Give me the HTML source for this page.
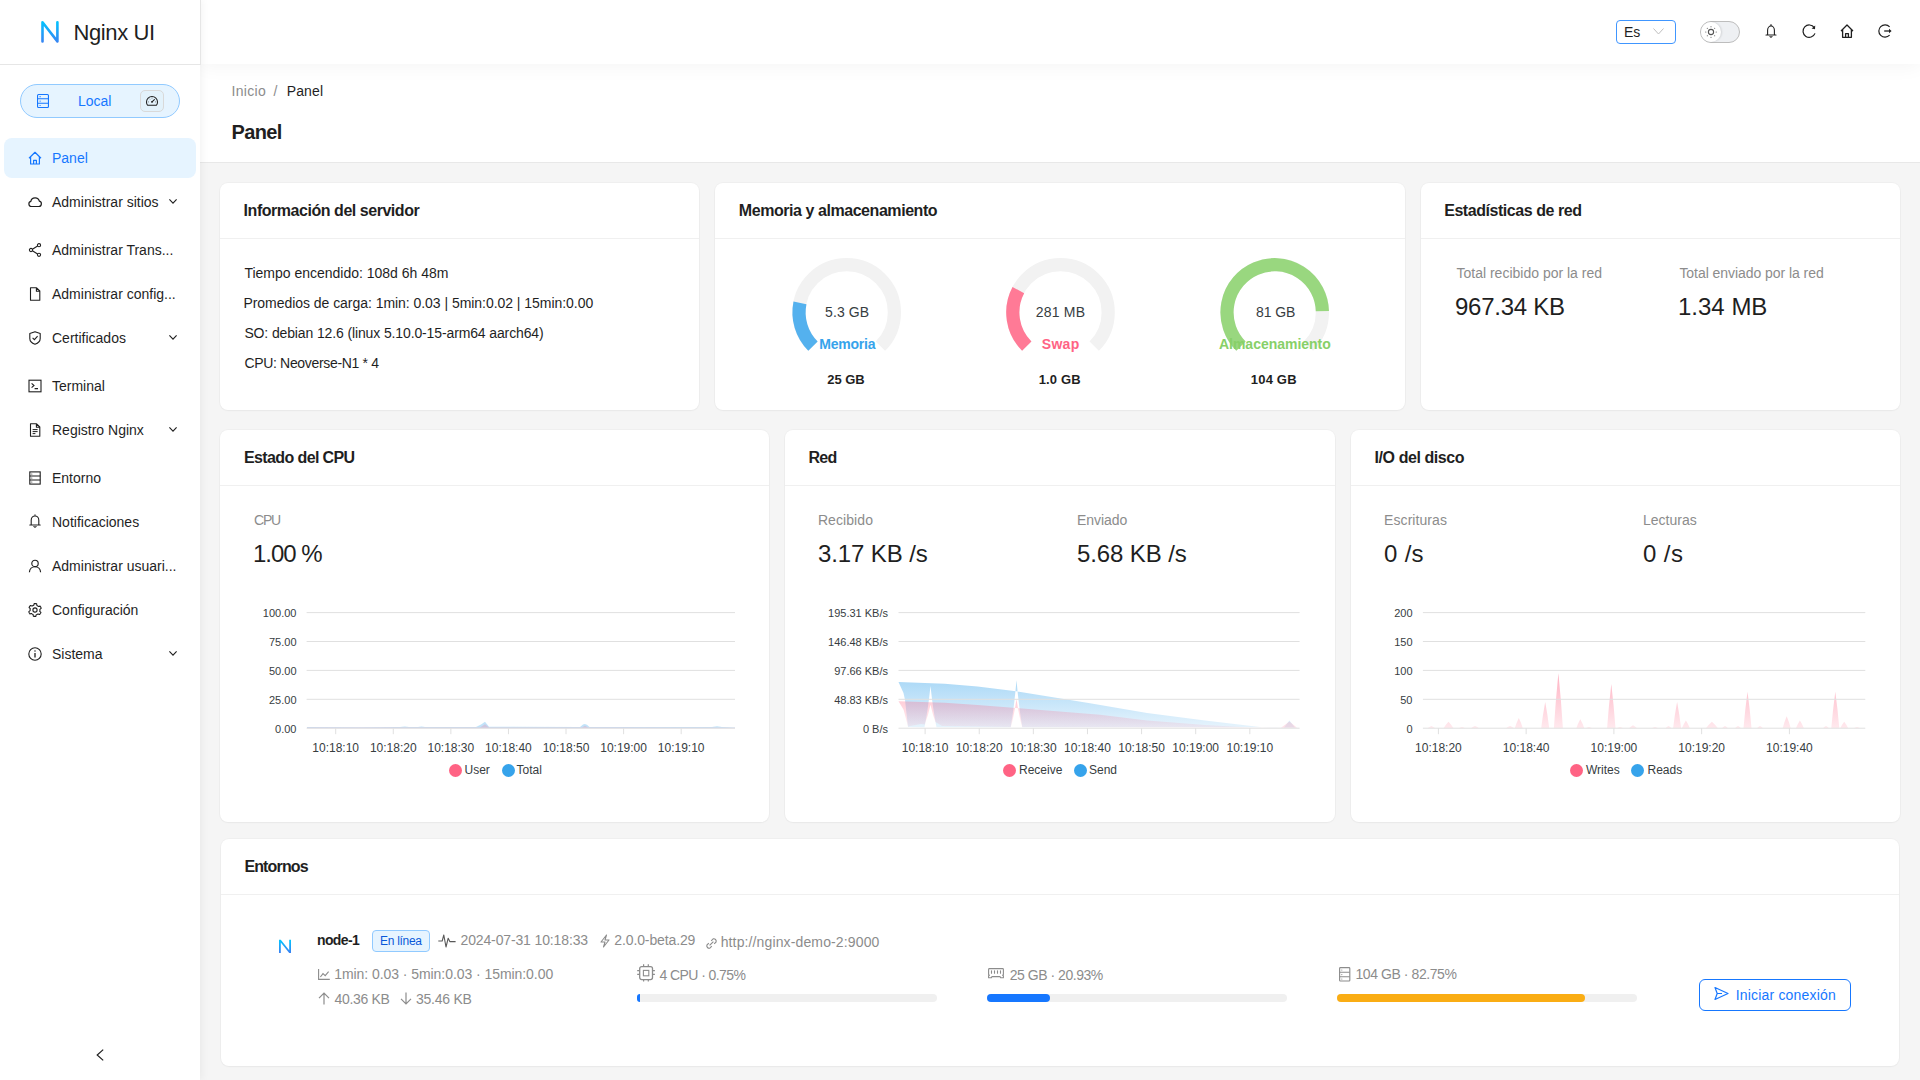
<!DOCTYPE html>
<html><head><meta charset="utf-8"><title>Nginx UI</title>
<style>
html,body{margin:0;padding:0}
body{width:1920px;height:1080px;position:relative;overflow:hidden;background:#f5f5f5;font-family:"Liberation Sans",sans-serif;}
.t{position:absolute;white-space:nowrap;line-height:1}
svg{overflow:visible}
</style></head><body>

<div style="position:absolute;left:200px;top:64px;width:1720px;height:98px;background:#fff;border-bottom:1px solid #e8e8e8"></div>
<div style="position:absolute;left:200px;top:0px;width:1720px;height:64px;background:#fff;box-shadow:0 3px 18px rgba(0,0,0,0.045)"></div>
<div style="position:absolute;left:0px;top:0px;width:200px;height:1080px;background:#fff;box-shadow:2px 0 8px rgba(0,0,0,0.05)"></div>
<div style="position:absolute;left:0px;top:0px;width:200px;height:64px;background:#fff;border-bottom:1px solid #e6e6e6;border-right:1px solid #e6e6e6;box-sizing:border-box;width:201px;height:65px"></div>
<svg style="position:absolute;left:40px;top:20px;" width="20" height="24" viewBox="0 0 20 24"><defs><linearGradient id="lg" x1="0" y1="0" x2="0" y2="24" gradientUnits="userSpaceOnUse"><stop offset="0" stop-color="#00c8ff"/><stop offset="1" stop-color="#3b7ff2"/></linearGradient></defs><path d="M2.5 21.4V2.3L17.4 21.4V2.3" fill="none" stroke="url(#lg)" stroke-width="2.6" stroke-linecap="round" stroke-linejoin="round"/></svg>
<div class="t" style="left:73.50px;top:22.00px;font-size:22px;color:#1f1f1f;letter-spacing:-0.400px;">Nginx UI</div>
<div style="position:absolute;left:1616px;top:20px;width:60px;height:24px;box-sizing:border-box;border:1px solid #4096ff;border-radius:4px;background:#fff"></div>
<div class="t" style="left:1624.00px;top:25.00px;font-size:14px;color:#1f1f1f;">Es</div>
<svg style="position:absolute;left:1653px;top:28px;" width="11" height="7" viewBox="0 0 11 7"><path d="M0.5 0.5L5.5 6L10.5 0.5" fill="none" stroke="#bfbfbf" stroke-width="1"/></svg>
<div style="position:absolute;left:1700px;top:21px;width:40px;height:22px;box-sizing:border-box;border:1px solid #bdbdbd;border-radius:11px;background:#eef0f3"></div>
<div style="position:absolute;left:1701px;top:22px;width:20px;height:20px;border-radius:50%;background:#fff;box-shadow:1px 0 2px rgba(0,0,0,0.12)"></div>
<svg style="position:absolute;left:1701px;top:22px;" width="20" height="20" viewBox="0 0 20 20"><circle cx="10" cy="10" r="2.6" fill="none" stroke="#555" stroke-width="1.1"/><circle cx="15.20" cy="10.00" r="0.55" fill="#555"/><circle cx="13.68" cy="13.68" r="0.55" fill="#555"/><circle cx="10.00" cy="15.20" r="0.55" fill="#555"/><circle cx="6.32" cy="13.68" r="0.55" fill="#555"/><circle cx="4.80" cy="10.00" r="0.55" fill="#555"/><circle cx="6.32" cy="6.32" r="0.55" fill="#555"/><circle cx="10.00" cy="4.80" r="0.55" fill="#555"/><circle cx="13.68" cy="6.32" r="0.55" fill="#555"/></svg>
<svg style="position:absolute;left:1764px;top:24px;" width="14" height="14" viewBox="0 0 14 14"><path d="M3.6 11V6.3C3.6 4 5.1 1.9 7 1.9S10.4 4 10.4 6.3V11M2 11H12M6 12.5Q7 13.9 8 12.5M7 0.6V1.9" fill="none" stroke="#1f1f1f" stroke-width="1.1" stroke-linecap="round"/></svg>
<svg style="position:absolute;left:1802px;top:24px;" width="14" height="14" viewBox="0 0 14 14"><path d="M12.3 3.6A6.2 6.2 0 1 0 13 9.4" fill="none" stroke="#1f1f1f" stroke-width="1.2"/><path d="M13.2 1.6L13 5.2L9.6 4.4Z" fill="#1f1f1f"/></svg>
<svg style="position:absolute;left:1840px;top:24px;" width="14" height="14" viewBox="0 0 14 14"><path d="M1 7L7 1L13 7M2.6 5.6V13.3H11.4V5.6M5.6 13.3V9.6H8.4V13.3" fill="none" stroke="#1f1f1f" stroke-width="1.3" stroke-linejoin="round"/></svg>
<svg style="position:absolute;left:1878px;top:24px;" width="14" height="14" viewBox="0 0 14 14"><path d="M11.6 2.8A6.2 6.2 0 1 0 11.6 11.2" fill="none" stroke="#1f1f1f" stroke-width="1.2"/><path d="M6.2 7H11.4" stroke="#1f1f1f" stroke-width="1.3"/><path d="M11 4.8L13.6 7L11 9.2Z" fill="#1f1f1f"/></svg>
<div style="position:absolute;left:20px;top:84px;width:160px;height:34px;box-sizing:border-box;border:1px solid #91caff;border-radius:17px;background:#e6f4ff"></div>
<svg style="position:absolute;left:37px;top:94px;" width="12" height="14" viewBox="0 0 12 14"><rect x="0.55" y="0.55" width="10.9" height="12.9" rx="1" fill="none" stroke="#1677ff" stroke-width="1.1"/><path d="M0.6 4.8H11.4M0.6 9.3H11.4" stroke="#1677ff" stroke-width="1.1"/><circle cx="3.1" cy="2.7" r="0.6" fill="#1677ff"/><circle cx="3.1" cy="7.1" r="0.6" fill="#1677ff"/><circle cx="3.1" cy="11.5" r="0.6" fill="#1677ff"/></svg>
<div class="t" style="left:78.00px;top:94.00px;font-size:14px;color:#1677ff;letter-spacing:-0.050px;">Local</div>
<div style="position:absolute;left:140px;top:90px;width:24px;height:22px;box-sizing:border-box;border:1px solid #d9d9d9;border-radius:5px;background:#e3f2fb"></div>
<svg style="position:absolute;left:146px;top:96px;" width="12" height="10" viewBox="0 0 12 10"><path d="M1.6 9.3Q0.5 7.8 0.5 5.9A5.5 5.5 0 0 1 11.5 5.9Q11.5 7.8 10.4 9.3Z" fill="none" stroke="#1f1f1f" stroke-width="1.05" stroke-linejoin="round"/><path d="M6 5.8L8.4 3.6" stroke="#1f1f1f" stroke-width="1.1" stroke-linecap="round"/><circle cx="6" cy="5.8" r="0.9" fill="#1f1f1f"/><path d="M2.2 5.9H3M9 5.9H9.8M3.6 2.8L4 3.4M6 1.7V2.5" stroke="#555" stroke-width="0.8"/></svg>
<div style="position:absolute;left:4px;top:138px;width:192px;height:40px;border-radius:8px;background:#e6f4ff"></div>
<div class="t" style="left:52.00px;top:151.00px;font-size:14px;color:#1677ff;">Panel</div>
<div class="t" style="left:52.00px;top:195.00px;font-size:14px;color:#1f1f1f;">Administrar sitios</div>
<svg style="position:absolute;left:169px;top:198.5px;" width="8" height="5" viewBox="0 0 8 5"><path d="M0.4 0.4L4 4.2L7.6 0.4" fill="none" stroke="#1f1f1f" stroke-width="1.1"/></svg>
<div class="t" style="left:52.00px;top:243.00px;font-size:14px;color:#1f1f1f;">Administrar Trans...</div>
<div class="t" style="left:52.00px;top:287.00px;font-size:14px;color:#1f1f1f;">Administrar config...</div>
<div class="t" style="left:52.00px;top:331.00px;font-size:14px;color:#1f1f1f;">Certificados</div>
<svg style="position:absolute;left:169px;top:334.5px;" width="8" height="5" viewBox="0 0 8 5"><path d="M0.4 0.4L4 4.2L7.6 0.4" fill="none" stroke="#1f1f1f" stroke-width="1.1"/></svg>
<div class="t" style="left:52.00px;top:379.00px;font-size:14px;color:#1f1f1f;">Terminal</div>
<div class="t" style="left:52.00px;top:423.00px;font-size:14px;color:#1f1f1f;">Registro Nginx</div>
<svg style="position:absolute;left:169px;top:426.5px;" width="8" height="5" viewBox="0 0 8 5"><path d="M0.4 0.4L4 4.2L7.6 0.4" fill="none" stroke="#1f1f1f" stroke-width="1.1"/></svg>
<div class="t" style="left:52.00px;top:471.00px;font-size:14px;color:#1f1f1f;">Entorno</div>
<div class="t" style="left:52.00px;top:515.00px;font-size:14px;color:#1f1f1f;">Notificaciones</div>
<div class="t" style="left:52.00px;top:559.00px;font-size:14px;color:#1f1f1f;">Administrar usuari...</div>
<div class="t" style="left:52.00px;top:603.00px;font-size:14px;color:#1f1f1f;">Configuración</div>
<div class="t" style="left:52.00px;top:647.00px;font-size:14px;color:#1f1f1f;">Sistema</div>
<svg style="position:absolute;left:169px;top:650.5px;" width="8" height="5" viewBox="0 0 8 5"><path d="M0.4 0.4L4 4.2L7.6 0.4" fill="none" stroke="#1f1f1f" stroke-width="1.1"/></svg>
<svg style="position:absolute;left:28px;top:150.6px;" width="14" height="14" viewBox="0 0 14 14"><path d="M1 7.2L7 1.3L13 7.2M2.6 5.8V13H11.4V5.8M5.6 13V9.4H8.4V13" fill="none" stroke="#1677ff" stroke-width="1.2" stroke-linejoin="round"/></svg>
<svg style="position:absolute;left:28px;top:194.7px;" width="14" height="14" viewBox="0 0 14 14"><path d="M3.6 11.5H10.8A2.7 2.7 0 0 0 11.4 6.2A4.4 4.4 0 0 0 2.8 6.4A2.6 2.6 0 0 0 3.6 11.5Z" fill="none" stroke="#1f1f1f" stroke-width="1.2"/></svg>
<svg style="position:absolute;left:28px;top:243px;" width="14" height="14" viewBox="0 0 14 14"><circle cx="11" cy="2.2" r="1.6" fill="none" stroke="#1f1f1f" stroke-width="1.1"/><circle cx="3" cy="7" r="1.6" fill="none" stroke="#1f1f1f" stroke-width="1.1"/><circle cx="11" cy="11.8" r="1.6" fill="none" stroke="#1f1f1f" stroke-width="1.1"/><path d="M4.4 6.2L9.6 3M4.4 7.8L9.6 11" stroke="#1f1f1f" stroke-width="1.1"/></svg>
<svg style="position:absolute;left:28px;top:286.75px;" width="14" height="14" viewBox="0 0 14 14"><path d="M2.5 0.8H8.6L11.8 4V13.2H2.5Z M8.4 0.8V4.2H11.8" fill="none" stroke="#1f1f1f" stroke-width="1.1" stroke-linejoin="round"/></svg>
<svg style="position:absolute;left:28px;top:330.5px;" width="14" height="14" viewBox="0 0 14 14"><path d="M7 0.8L12.2 2.6V7.4C12.2 10.2 9.8 12.2 7 13.2C4.2 12.2 1.8 10.2 1.8 7.4V2.6Z" fill="none" stroke="#1f1f1f" stroke-width="1.1" stroke-linejoin="round"/><path d="M4.6 6.9L6.4 8.6L9.6 5.2" fill="none" stroke="#1f1f1f" stroke-width="1.1"/></svg>
<svg style="position:absolute;left:28px;top:378.75px;" width="14" height="14" viewBox="0 0 14 14"><rect x="1" y="1.2" width="12" height="11.6" fill="none" stroke="#1f1f1f" stroke-width="1.1"/><path d="M3.6 4.4L6 6.5L3.6 8.6M6.6 9.6H10" fill="none" stroke="#1f1f1f" stroke-width="1.1"/></svg>
<svg style="position:absolute;left:28px;top:422.5px;" width="14" height="14" viewBox="0 0 14 14"><path d="M2.5 0.8H8.6L11.8 4V13.2H2.5Z M8.4 0.8V4.2H11.8" fill="none" stroke="#1f1f1f" stroke-width="1.1" stroke-linejoin="round"/><path d="M4.6 6.6H9.6M4.6 8.6H9.6M4.6 10.6H7.4" stroke="#1f1f1f" stroke-width="1"/></svg>
<svg style="position:absolute;left:28px;top:470.5px;" width="14" height="14" viewBox="0 0 14 14"><rect x="1.8" y="0.9" width="10.4" height="12.2" fill="none" stroke="#1f1f1f" stroke-width="1.1"/><path d="M1.8 5H12.2M1.8 9H12.2" stroke="#1f1f1f" stroke-width="1.1"/><circle cx="3.8" cy="3" r="0.5" fill="#1f1f1f"/><circle cx="3.8" cy="7" r="0.5" fill="#1f1f1f"/><circle cx="3.8" cy="11" r="0.5" fill="#1f1f1f"/></svg>
<svg style="position:absolute;left:28px;top:514.25px;" width="14" height="14" viewBox="0 0 14 14"><path d="M3.2 11V6.2C3.2 3.9 4.9 2 7 2S10.8 3.9 10.8 6.2V11M1.8 11H12.2M5.9 12.5Q7 13.8 8.1 12.5M7 0.8V2" fill="none" stroke="#1f1f1f" stroke-width="1.1" stroke-linecap="round"/></svg>
<svg style="position:absolute;left:28px;top:558.75px;" width="14" height="14" viewBox="0 0 14 14"><circle cx="7" cy="4.4" r="3.2" fill="none" stroke="#1f1f1f" stroke-width="1.15"/><path d="M1.4 13.2C1.6 9.9 4 7.7 7 7.7S12.4 9.9 12.6 13.2" fill="none" stroke="#1f1f1f" stroke-width="1.15"/></svg>
<svg style="position:absolute;left:28px;top:602.8px;" width="14" height="14" viewBox="0 0 14 14"><path d="M7.00 0.60 L7.84 0.65 L8.66 0.82 L8.88 2.47 L9.45 2.76 L9.98 3.11 L10.46 3.54 L12.08 3.10 L12.54 3.80 L12.91 4.55 L13.18 5.34 L11.86 6.36 L11.90 7.00 L11.86 7.64 L11.73 8.27 L12.91 9.45 L12.54 10.20 L12.08 10.90 L11.53 11.53 L9.98 10.89 L9.45 11.24 L8.88 11.53 L8.27 11.73 L7.84 13.35 L7.00 13.40 L6.16 13.35 L5.34 13.18 L5.12 11.53 L4.55 11.24 L4.02 10.89 L3.54 10.46 L1.92 10.90 L1.46 10.20 L1.09 9.45 L0.82 8.66 L2.14 7.64 L2.10 7.00 L2.14 6.36 L2.27 5.73 L1.09 4.55 L1.46 3.80 L1.92 3.10 L2.47 2.47 L4.02 3.11 L4.55 2.76 L5.12 2.47 L5.73 2.27 L6.16 0.65Z" fill="none" stroke="#1f1f1f" stroke-width="1.1" stroke-linejoin="round"/><circle cx="7" cy="7" r="2.1" fill="none" stroke="#1f1f1f" stroke-width="1.1"/></svg>
<svg style="position:absolute;left:28px;top:646.6px;" width="14" height="14" viewBox="0 0 14 14"><circle cx="7" cy="7" r="6.2" fill="none" stroke="#1f1f1f" stroke-width="1.1"/><path d="M7 6V10.6" stroke="#1f1f1f" stroke-width="1.3"/><circle cx="7" cy="4.1" r="0.75" fill="#1f1f1f"/></svg>
<svg style="position:absolute;left:96px;top:1049px;" width="8" height="12" viewBox="0 0 8 12"><path d="M7.2 0.6L1.2 6L7.2 11.4" fill="none" stroke="#1f1f1f" stroke-width="1.2"/></svg>
<div class="t" style="left:231.40px;top:84.00px;font-size:14px;color:#8c8c8c;letter-spacing:0.360px;">Inicio</div>
<div class="t" style="left:273.40px;top:84.00px;font-size:14px;color:#8c8c8c;">/</div>
<div class="t" style="left:286.70px;top:84.00px;font-size:14px;color:#1f1f1f;letter-spacing:0.150px;">Panel</div>
<div class="t" style="left:231.40px;top:122.00px;font-size:20px;color:#1f1f1f;font-weight:600;letter-spacing:-0.600px;">Panel</div>
<div style="position:absolute;left:220px;top:183px;width:479px;height:227px;background:#fff;border-radius:8px;box-shadow:0 0 0 1px rgba(0,0,0,0.025),0 1px 2px rgba(0,0,0,0.03)"></div>
<div style="position:absolute;left:220px;top:238px;width:479px;height:1px;background:#f0f0f0"></div>
<div class="t" style="left:243.60px;top:203.00px;font-size:16px;color:#1f1f1f;font-weight:600;letter-spacing:-0.461px;">Información del servidor</div>
<div style="position:absolute;left:715px;top:183px;width:690px;height:227px;background:#fff;border-radius:8px;box-shadow:0 0 0 1px rgba(0,0,0,0.025),0 1px 2px rgba(0,0,0,0.03)"></div>
<div style="position:absolute;left:715px;top:238px;width:690px;height:1px;background:#f0f0f0"></div>
<div class="t" style="left:738.80px;top:203.00px;font-size:16px;color:#1f1f1f;font-weight:600;letter-spacing:-0.443px;">Memoria y almacenamiento</div>
<div style="position:absolute;left:1421px;top:183px;width:479px;height:227px;background:#fff;border-radius:8px;box-shadow:0 0 0 1px rgba(0,0,0,0.025),0 1px 2px rgba(0,0,0,0.03)"></div>
<div style="position:absolute;left:1421px;top:238px;width:479px;height:1px;background:#f0f0f0"></div>
<div class="t" style="left:1444.20px;top:203.00px;font-size:16px;color:#1f1f1f;font-weight:600;letter-spacing:-0.445px;">Estadísticas de red</div>
<div style="position:absolute;left:220px;top:430px;width:549px;height:392px;background:#fff;border-radius:8px;box-shadow:0 0 0 1px rgba(0,0,0,0.025),0 1px 2px rgba(0,0,0,0.03)"></div>
<div style="position:absolute;left:220px;top:485px;width:549px;height:1px;background:#f0f0f0"></div>
<div class="t" style="left:244.00px;top:450.00px;font-size:16px;color:#1f1f1f;font-weight:600;letter-spacing:-0.615px;">Estado del CPU</div>
<div style="position:absolute;left:785px;top:430px;width:550px;height:392px;background:#fff;border-radius:8px;box-shadow:0 0 0 1px rgba(0,0,0,0.025),0 1px 2px rgba(0,0,0,0.03)"></div>
<div style="position:absolute;left:785px;top:485px;width:550px;height:1px;background:#f0f0f0"></div>
<div class="t" style="left:808.40px;top:450.00px;font-size:16px;color:#1f1f1f;font-weight:600;letter-spacing:-0.700px;">Red</div>
<div style="position:absolute;left:1351px;top:430px;width:549px;height:392px;background:#fff;border-radius:8px;box-shadow:0 0 0 1px rgba(0,0,0,0.025),0 1px 2px rgba(0,0,0,0.03)"></div>
<div style="position:absolute;left:1351px;top:485px;width:549px;height:1px;background:#f0f0f0"></div>
<div class="t" style="left:1374.60px;top:450.00px;font-size:16px;color:#1f1f1f;font-weight:600;letter-spacing:-0.433px;">I/O del disco</div>
<div style="position:absolute;left:221px;top:839px;width:1678px;height:227px;background:#fff;border-radius:8px;box-shadow:0 0 0 1px rgba(0,0,0,0.025),0 1px 2px rgba(0,0,0,0.03)"></div>
<div style="position:absolute;left:221px;top:894px;width:1678px;height:1px;background:#f0f0f0"></div>
<div class="t" style="left:244.40px;top:859.00px;font-size:16px;color:#1f1f1f;font-weight:600;letter-spacing:-0.857px;">Entornos</div>
<div class="t" style="left:244.40px;top:266.00px;font-size:14px;color:#1f1f1f;letter-spacing:-0.007px;">Tiempo encendido: 108d 6h 48m</div>
<div class="t" style="left:243.40px;top:296.00px;font-size:14px;color:#1f1f1f;letter-spacing:-0.041px;">Promedios de carga: 1min: 0.03 | 5min:0.02 | 15min:0.00</div>
<div class="t" style="left:244.40px;top:326.00px;font-size:14px;color:#1f1f1f;letter-spacing:-0.126px;">SO: debian 12.6 (linux 5.10.0-15-arm64 aarch64)</div>
<div class="t" style="left:244.40px;top:356.00px;font-size:14px;color:#1f1f1f;letter-spacing:-0.326px;">CPU: Neoverse-N1 * 4</div>
<svg style="position:absolute;left:0;top:0" width="1920" height="1080"><path d="M812.97 346.13A47.7 47.7 0 1 1 880.43 346.13" fill="none" stroke="#f2f2f2" stroke-width="13.2"/><path d="M812.97 346.13A47.7 47.7 0 0 1 799.96 302.88" fill="none" stroke="#54b1ee" stroke-width="13.2"/></svg>
<div class="t" style="left:547.10px;width:600px;text-align:center;top:305.00px;font-size:14px;color:#373d3f;letter-spacing:0.080px;">5.3 GB</div>
<div class="t" style="left:547.30px;width:600px;text-align:center;top:337.00px;font-size:14px;color:#36a3eb;font-weight:700;letter-spacing:-0.200px;">Memoria</div>
<div class="t" style="left:545.90px;width:600px;text-align:center;top:373.00px;font-size:13px;color:#1f1f1f;font-weight:700;letter-spacing:-0.050px;">25 GB</div>
<svg style="position:absolute;left:0;top:0" width="1920" height="1080"><path d="M1026.77 346.13A47.7 47.7 0 1 1 1094.23 346.13" fill="none" stroke="#f2f2f2" stroke-width="13.2"/><path d="M1026.77 346.13A47.7 47.7 0 0 1 1018.34 290.08" fill="none" stroke="#ff7a96" stroke-width="13.2"/></svg>
<div class="t" style="left:760.50px;width:600px;text-align:center;top:305.00px;font-size:14px;color:#373d3f;letter-spacing:0.240px;">281 MB</div>
<div class="t" style="left:760.70px;width:600px;text-align:center;top:337.00px;font-size:14px;color:#ff6384;font-weight:700;letter-spacing:0.267px;">Swap</div>
<div class="t" style="left:759.70px;width:600px;text-align:center;top:373.00px;font-size:13px;color:#1f1f1f;font-weight:700;letter-spacing:0.120px;">1.0 GB</div>
<svg style="position:absolute;left:0;top:0" width="1920" height="1080"><path d="M1240.97 346.13A47.7 47.7 0 1 1 1308.43 346.13" fill="none" stroke="#f2f2f2" stroke-width="13.2"/><path d="M1240.97 346.13A47.7 47.7 0 1 1 1322.38 311.09" fill="none" stroke="#99d77f" stroke-width="13.2"/></svg>
<div class="t" style="left:975.70px;width:600px;text-align:center;top:305.00px;font-size:14px;color:#373d3f;letter-spacing:-0.100px;">81 GB</div>
<div class="t" style="left:974.90px;width:600px;text-align:center;top:337.00px;font-size:14px;color:#87d068;font-weight:700;letter-spacing:-0.015px;">Almacenamiento</div>
<div class="t" style="left:973.80px;width:600px;text-align:center;top:373.00px;font-size:13px;color:#1f1f1f;font-weight:700;letter-spacing:0.180px;">104 GB</div>
<div class="t" style="left:1456.50px;top:266.00px;font-size:14px;color:#8c8c8c;">Total recibido por la red</div>
<div class="t" style="left:1455.00px;top:295.00px;font-size:24px;color:#1f1f1f;letter-spacing:-0.250px;">967.34 KB</div>
<div class="t" style="left:1679.40px;top:266.00px;font-size:14px;color:#8c8c8c;letter-spacing:-0.052px;">Total enviado por la red</div>
<div class="t" style="left:1678.00px;top:295.00px;font-size:24px;color:#1f1f1f;">1.34 MB</div>
<div class="t" style="left:254.00px;top:513.00px;font-size:14px;color:#8c8c8c;letter-spacing:-1.200px;">CPU</div>
<div class="t" style="left:253.00px;top:542.00px;font-size:24px;color:#1f1f1f;letter-spacing:-1.040px;">1.00 %</div>
<div class="t" style="left:817.90px;top:513.00px;font-size:14px;color:#8c8c8c;letter-spacing:0.086px;">Recibido</div>
<div class="t" style="left:817.90px;top:542.00px;font-size:24px;color:#1f1f1f;letter-spacing:-0.089px;">3.17 KB /s</div>
<div class="t" style="left:1076.90px;top:513.00px;font-size:14px;color:#8c8c8c;letter-spacing:-0.033px;">Enviado</div>
<div class="t" style="left:1076.90px;top:542.00px;font-size:24px;color:#1f1f1f;letter-spacing:-0.089px;">5.68 KB /s</div>
<div class="t" style="left:1384.10px;top:513.00px;font-size:14px;color:#8c8c8c;letter-spacing:0.067px;">Escrituras</div>
<div class="t" style="left:1384.10px;top:542.00px;font-size:24px;color:#1f1f1f;letter-spacing:0.267px;">0 /s</div>
<div class="t" style="left:1643.00px;top:513.00px;font-size:14px;color:#8c8c8c;">Lecturas</div>
<div class="t" style="left:1643.00px;top:542.00px;font-size:24px;color:#1f1f1f;letter-spacing:0.400px;">0 /s</div>
<svg style="position:absolute;left:0;top:0" width="1920" height="1080"><defs><linearGradient id="gp" x1="0" y1="0" x2="0" y2="1"><stop offset="0" stop-color="#ff6384" stop-opacity="0.45"/><stop offset="1" stop-color="#ff6384" stop-opacity="0.1"/></linearGradient><linearGradient id="gb" x1="0" y1="0" x2="0" y2="1"><stop offset="0" stop-color="#36a3eb" stop-opacity="0.45"/><stop offset="1" stop-color="#36a3eb" stop-opacity="0.1"/></linearGradient></defs><path d="M307 728.2L307 727L360 727.2L400 727L404.8 726.4L409 727.1L418 727.1L421.5 726.6L425 727.1L476 727L481 724.5L485 721.8L489 726.8L580 727L583 724.6L584.7 724L587 724.8L589.5 727L712 727.1L717 726.3L722 727.1L735 727.5L735 728.2Z" fill="#36a3eb" fill-opacity="0.3"/><path d="M307 728.2L307 727.6L480 727.5L485 724.2L489 727.6L582 727.6L585 725.8L588 727.6L735 727.8L735 728.2Z" fill="#ff6384" fill-opacity="0.22"/><line x1="306.6" y1="612.6" x2="735" y2="612.6" stroke="#e0e0e0" stroke-width="1"/><line x1="306.6" y1="641.5" x2="735" y2="641.5" stroke="#e0e0e0" stroke-width="1"/><line x1="306.6" y1="670.4" x2="735" y2="670.4" stroke="#e0e0e0" stroke-width="1"/><line x1="306.6" y1="699.3" x2="735" y2="699.3" stroke="#e0e0e0" stroke-width="1"/><line x1="306.6" y1="728.2" x2="735" y2="728.2" stroke="#e0e0e0" stroke-width="1"/><line x1="335.7" y1="728.2" x2="335.7" y2="734.2" stroke="#e0e0e0" stroke-width="1"/><line x1="393.28" y1="728.2" x2="393.28" y2="734.2" stroke="#e0e0e0" stroke-width="1"/><line x1="450.86" y1="728.2" x2="450.86" y2="734.2" stroke="#e0e0e0" stroke-width="1"/><line x1="508.44" y1="728.2" x2="508.44" y2="734.2" stroke="#e0e0e0" stroke-width="1"/><line x1="566.02" y1="728.2" x2="566.02" y2="734.2" stroke="#e0e0e0" stroke-width="1"/><line x1="623.5999999999999" y1="728.2" x2="623.5999999999999" y2="734.2" stroke="#e0e0e0" stroke-width="1"/><line x1="681.1800000000001" y1="728.2" x2="681.1800000000001" y2="734.2" stroke="#e0e0e0" stroke-width="1"/></svg>
<div class="t" style="left:-303.50px;width:600px;text-align:right;top:608.00px;font-size:11px;color:#373d3f;">100.00</div>
<div class="t" style="left:-303.50px;width:600px;text-align:right;top:637.00px;font-size:11px;color:#373d3f;">75.00</div>
<div class="t" style="left:-303.50px;width:600px;text-align:right;top:666.00px;font-size:11px;color:#373d3f;">50.00</div>
<div class="t" style="left:-303.50px;width:600px;text-align:right;top:695.00px;font-size:11px;color:#373d3f;">25.00</div>
<div class="t" style="left:-303.50px;width:600px;text-align:right;top:724.00px;font-size:11px;color:#373d3f;">0.00</div>
<div class="t" style="left:35.70px;width:600px;text-align:center;top:742.00px;font-size:12px;color:#373d3f;">10:18:10</div>
<div class="t" style="left:93.28px;width:600px;text-align:center;top:742.00px;font-size:12px;color:#373d3f;">10:18:20</div>
<div class="t" style="left:150.86px;width:600px;text-align:center;top:742.00px;font-size:12px;color:#373d3f;">10:18:30</div>
<div class="t" style="left:208.44px;width:600px;text-align:center;top:742.00px;font-size:12px;color:#373d3f;">10:18:40</div>
<div class="t" style="left:266.02px;width:600px;text-align:center;top:742.00px;font-size:12px;color:#373d3f;">10:18:50</div>
<div class="t" style="left:323.60px;width:600px;text-align:center;top:742.00px;font-size:12px;color:#373d3f;">10:19:00</div>
<div class="t" style="left:381.18px;width:600px;text-align:center;top:742.00px;font-size:12px;color:#373d3f;">10:19:10</div>
<div style="position:absolute;left:448.5px;top:763.5px;width:13px;height:13px;border-radius:50%;background:#ff6384"></div>
<div class="t" style="left:464.50px;top:764.00px;font-size:12px;color:#373d3f;">User</div>
<div style="position:absolute;left:501.5px;top:763.5px;width:13px;height:13px;border-radius:50%;background:#36a3eb"></div>
<div class="t" style="left:516.50px;top:764.00px;font-size:12px;color:#373d3f;">Total</div>
<svg style="position:absolute;left:0;top:0" width="1920" height="1080"><defs><linearGradient id="gb2" x1="0" y1="680" x2="0" y2="728" gradientUnits="userSpaceOnUse"><stop offset="0" stop-color="#36a3eb" stop-opacity="0.42"/><stop offset="1" stop-color="#36a3eb" stop-opacity="0.12"/></linearGradient><linearGradient id="gp2" x1="0" y1="700" x2="0" y2="728" gradientUnits="userSpaceOnUse"><stop offset="0" stop-color="#ff6384" stop-opacity="0.32"/><stop offset="1" stop-color="#ff6384" stop-opacity="0.08"/></linearGradient></defs><path d="M898.5 682L944.7 683.7L977.5 686.4L1016 691.3L1090 703.2L1147 713L1205 720.4L1262 727.3L1299.6 727.8 L1295 727.4 L1289.4 720.4 L1284 727.4 L1240 727.2 L1021.5 727.2 L1022.3 727.2 Q1018.9 707.5 1016.5 680.2 Q1014.1 707.5 1010.7 727.2 L935 727.2 L936.5 727.2 Q933.0 709.9 930.5 686.0 Q928.0 709.9 924.5 727.2 L908 727 L905 700 L903.5 693Z" fill="url(#gb2)" fill-rule="evenodd"/><path d="M898.5 701.2L944.7 702.8L977.5 705L1016 708L1100 714.8L1147 720.4L1205 725L1250 727.4L1299.6 727.8 L1021 727 L1022.1 727.0 Q1018.9 715.2 1016.5 698.9 Q1014.1 715.2 1010.9 727.0 L942 726 L935.5 722 L936.3 724.5 Q932.9 716.2 930.5 704.8 Q928.1 716.2 924.7 724.5 L921 724 L908 726.6 L903.6 709.8Z" fill="url(#gp2)" fill-rule="evenodd"/><path d="M1281 727.8L1289.4 721.5L1297 727.8Z" fill="#ff6384" fill-opacity="0.18"/><line x1="898.5" y1="612.6" x2="1299.6" y2="612.6" stroke="#e0e0e0" stroke-width="1"/><line x1="898.5" y1="641.5" x2="1299.6" y2="641.5" stroke="#e0e0e0" stroke-width="1"/><line x1="898.5" y1="670.4" x2="1299.6" y2="670.4" stroke="#e0e0e0" stroke-width="1"/><line x1="898.5" y1="699.3" x2="1299.6" y2="699.3" stroke="#e0e0e0" stroke-width="1"/><line x1="898.5" y1="728.2" x2="1299.6" y2="728.2" stroke="#e0e0e0" stroke-width="1"/><line x1="925.1" y1="728.2" x2="925.1" y2="734.2" stroke="#e0e0e0" stroke-width="1"/><line x1="979.22" y1="728.2" x2="979.22" y2="734.2" stroke="#e0e0e0" stroke-width="1"/><line x1="1033.34" y1="728.2" x2="1033.34" y2="734.2" stroke="#e0e0e0" stroke-width="1"/><line x1="1087.46" y1="728.2" x2="1087.46" y2="734.2" stroke="#e0e0e0" stroke-width="1"/><line x1="1141.58" y1="728.2" x2="1141.58" y2="734.2" stroke="#e0e0e0" stroke-width="1"/><line x1="1195.7" y1="728.2" x2="1195.7" y2="734.2" stroke="#e0e0e0" stroke-width="1"/><line x1="1249.82" y1="728.2" x2="1249.82" y2="734.2" stroke="#e0e0e0" stroke-width="1"/></svg>
<div class="t" style="left:288.00px;width:600px;text-align:right;top:608.00px;font-size:11px;color:#373d3f;">195.31 KB/s</div>
<div class="t" style="left:288.00px;width:600px;text-align:right;top:637.00px;font-size:11px;color:#373d3f;">146.48 KB/s</div>
<div class="t" style="left:288.00px;width:600px;text-align:right;top:666.00px;font-size:11px;color:#373d3f;">97.66 KB/s</div>
<div class="t" style="left:288.00px;width:600px;text-align:right;top:695.00px;font-size:11px;color:#373d3f;">48.83 KB/s</div>
<div class="t" style="left:288.00px;width:600px;text-align:right;top:724.00px;font-size:11px;color:#373d3f;">0 B/s</div>
<div class="t" style="left:625.10px;width:600px;text-align:center;top:742.00px;font-size:12px;color:#373d3f;">10:18:10</div>
<div class="t" style="left:679.22px;width:600px;text-align:center;top:742.00px;font-size:12px;color:#373d3f;">10:18:20</div>
<div class="t" style="left:733.34px;width:600px;text-align:center;top:742.00px;font-size:12px;color:#373d3f;">10:18:30</div>
<div class="t" style="left:787.46px;width:600px;text-align:center;top:742.00px;font-size:12px;color:#373d3f;">10:18:40</div>
<div class="t" style="left:841.58px;width:600px;text-align:center;top:742.00px;font-size:12px;color:#373d3f;">10:18:50</div>
<div class="t" style="left:895.70px;width:600px;text-align:center;top:742.00px;font-size:12px;color:#373d3f;">10:19:00</div>
<div class="t" style="left:949.82px;width:600px;text-align:center;top:742.00px;font-size:12px;color:#373d3f;">10:19:10</div>
<div style="position:absolute;left:1003.3px;top:763.5px;width:13px;height:13px;border-radius:50%;background:#ff6384"></div>
<div class="t" style="left:1019.00px;top:764.00px;font-size:12px;color:#373d3f;">Receive</div>
<div style="position:absolute;left:1073.5px;top:763.5px;width:13px;height:13px;border-radius:50%;background:#36a3eb"></div>
<div class="t" style="left:1089.00px;top:764.00px;font-size:12px;color:#373d3f;">Send</div>
<svg style="position:absolute;left:0;top:0" width="1920" height="1080"><defs><linearGradient id="gp3" x1="0" y1="672" x2="0" y2="728" gradientUnits="userSpaceOnUse"><stop offset="0" stop-color="#ff6384" stop-opacity="0.5"/><stop offset="1" stop-color="#ff6384" stop-opacity="0.14"/></linearGradient></defs><path d="M1423 728.2 L1427.4 728.2 Q1428.9 727.0 1431.4 725.9 Q1433.9 727.0 1435.4 728.2 L1443.5 728.2 Q1445.4 725.0 1448.5 721.7 Q1451.6 725.0 1453.5 728.2 L1459.0 728.2 Q1460.1 727.6 1462.0 727.0 Q1463.9 727.6 1465.0 728.2 L1471.0 728.2 Q1472.5 727.1 1475.0 726.0 Q1477.5 727.1 1479.0 728.2 L1506.0 728.2 Q1507.5 727.1 1510.0 726.0 Q1512.5 727.1 1514.0 728.2 L1514.8 728.2 Q1516.3 723.2 1518.8 718.1 Q1521.3 723.2 1522.8 728.2 L1541.2 728.2 Q1542.7 715.0 1545.2 701.9 Q1547.7 715.0 1549.2 728.2 L1553.9 728.2 Q1555.6 700.7 1558.4 673.2 Q1561.2 700.7 1562.9 728.2 L1576.3 728.2 Q1577.8 723.8 1580.3 719.3 Q1582.8 723.8 1584.3 728.2 L1586.0 728.2 Q1587.1 727.6 1589.0 727.0 Q1590.9 727.6 1592.0 728.2 L1607.1 728.2 Q1608.7 706.1 1611.3 684.0 Q1613.9 706.1 1615.5 728.2 L1617.0 728.2 Q1618.1 727.6 1620.0 727.0 Q1621.9 727.6 1623.0 728.2 L1629.0 728.2 Q1630.5 726.8 1633.0 725.3 Q1635.5 726.8 1637.0 728.2 L1652.0 728.2 Q1653.1 727.6 1655.0 727.0 Q1656.9 727.6 1658.0 728.2 L1665.5 728.2 Q1666.6 727.1 1668.5 726.0 Q1670.4 727.1 1671.5 728.2 L1673.1 728.2 Q1674.6 715.0 1677.1 701.9 Q1679.6 715.0 1681.1 728.2 L1681.9 728.2 Q1683.4 724.4 1685.9 720.5 Q1688.4 724.4 1689.9 728.2 L1705.9 728.2 Q1708.2 725.0 1711.9 721.7 Q1715.6 725.0 1717.9 728.2 L1722.0 728.2 Q1723.1 727.1 1725.0 726.0 Q1726.9 727.1 1728.0 728.2 L1735.0 728.2 Q1736.1 727.1 1738.0 726.0 Q1739.9 727.1 1741.0 728.2 L1743.5 728.2 Q1745.0 710.0 1747.5 691.7 Q1750.0 710.0 1751.5 728.2 L1757.0 728.2 Q1758.1 727.1 1760.0 726.0 Q1761.9 727.1 1763.0 728.2 L1782.7 728.2 Q1784.2 722.2 1786.7 716.3 Q1789.2 722.2 1790.7 728.2 L1795.9 728.2 Q1797.4 724.4 1799.9 720.5 Q1802.4 724.4 1803.9 728.2 L1823.0 728.2 Q1824.1 727.1 1826.0 726.0 Q1827.9 727.1 1829.0 728.2 L1831.3 728.2 Q1832.8 710.0 1835.3 691.7 Q1837.8 710.0 1839.3 728.2 L1840.2 728.2 Q1841.7 725.0 1844.2 721.7 Q1846.7 725.0 1848.2 728.2 L1854.0 728.2 Q1855.1 727.6 1857.0 727.0 Q1858.9 727.6 1860.0 728.2 L1865 728.2Z" fill="url(#gp3)"/><line x1="1422.9" y1="612.6" x2="1865.3" y2="612.6" stroke="#e0e0e0" stroke-width="1"/><line x1="1422.9" y1="641.5" x2="1865.3" y2="641.5" stroke="#e0e0e0" stroke-width="1"/><line x1="1422.9" y1="670.4" x2="1865.3" y2="670.4" stroke="#e0e0e0" stroke-width="1"/><line x1="1422.9" y1="699.3" x2="1865.3" y2="699.3" stroke="#e0e0e0" stroke-width="1"/><line x1="1422.9" y1="728.2" x2="1865.3" y2="728.2" stroke="#e0e0e0" stroke-width="1"/><line x1="1438.4" y1="728.2" x2="1438.4" y2="734.2" stroke="#e0e0e0" stroke-width="1"/><line x1="1526.15" y1="728.2" x2="1526.15" y2="734.2" stroke="#e0e0e0" stroke-width="1"/><line x1="1613.9" y1="728.2" x2="1613.9" y2="734.2" stroke="#e0e0e0" stroke-width="1"/><line x1="1701.65" y1="728.2" x2="1701.65" y2="734.2" stroke="#e0e0e0" stroke-width="1"/><line x1="1789.4" y1="728.2" x2="1789.4" y2="734.2" stroke="#e0e0e0" stroke-width="1"/></svg>
<div class="t" style="left:812.50px;width:600px;text-align:right;top:608.00px;font-size:11px;color:#373d3f;">200</div>
<div class="t" style="left:812.50px;width:600px;text-align:right;top:637.00px;font-size:11px;color:#373d3f;">150</div>
<div class="t" style="left:812.50px;width:600px;text-align:right;top:666.00px;font-size:11px;color:#373d3f;">100</div>
<div class="t" style="left:812.50px;width:600px;text-align:right;top:695.00px;font-size:11px;color:#373d3f;">50</div>
<div class="t" style="left:812.50px;width:600px;text-align:right;top:724.00px;font-size:11px;color:#373d3f;">0</div>
<div class="t" style="left:1138.40px;width:600px;text-align:center;top:742.00px;font-size:12px;color:#373d3f;">10:18:20</div>
<div class="t" style="left:1226.15px;width:600px;text-align:center;top:742.00px;font-size:12px;color:#373d3f;">10:18:40</div>
<div class="t" style="left:1313.90px;width:600px;text-align:center;top:742.00px;font-size:12px;color:#373d3f;">10:19:00</div>
<div class="t" style="left:1401.65px;width:600px;text-align:center;top:742.00px;font-size:12px;color:#373d3f;">10:19:20</div>
<div class="t" style="left:1489.40px;width:600px;text-align:center;top:742.00px;font-size:12px;color:#373d3f;">10:19:40</div>
<div style="position:absolute;left:1570.2px;top:763.5px;width:13px;height:13px;border-radius:50%;background:#ff6384"></div>
<div class="t" style="left:1586.00px;top:764.00px;font-size:12px;color:#373d3f;">Writes</div>
<div style="position:absolute;left:1630.9px;top:763.5px;width:13px;height:13px;border-radius:50%;background:#36a3eb"></div>
<div class="t" style="left:1647.50px;top:764.00px;font-size:12px;color:#373d3f;">Reads</div>
<svg style="position:absolute;left:278px;top:939px;" width="14" height="14" viewBox="0 0 14 14"><defs><linearGradient id="lg2" x1="0" y1="0" x2="0" y2="1"><stop offset="0" stop-color="#00c8ff"/><stop offset="1" stop-color="#3b7ff2"/></linearGradient></defs><path d="M1 0.8H2.8L11.2 11.2V0.8H13V13.9H11.2L2.8 3.5V13.9H1Z" fill="url(#lg2)"/></svg>
<div class="t" style="left:317.00px;top:933.00px;font-size:14px;color:#1f1f1f;font-weight:700;letter-spacing:-0.640px;">node-1</div>
<div style="position:absolute;left:372px;top:930px;width:58px;height:22px;box-sizing:border-box;border:1px solid #91caff;border-radius:4px;background:#e6f4ff"></div>
<div class="t" style="left:380.10px;top:935.00px;font-size:12px;color:#0958d9;letter-spacing:-0.314px;">En línea</div>
<svg style="position:absolute;left:438px;top:934px;" width="18" height="14" viewBox="0 0 18 14"><path d="M0.3 7H4.2L5.8 1L8 13L10.2 4.2L11.8 7.6H17.6" fill="none" stroke="#595959" stroke-width="1.1" stroke-linejoin="round"/></svg>
<div class="t" style="left:460.50px;top:933.00px;font-size:14px;color:#8c8c8c;letter-spacing:-0.134px;">2024-07-31 10:18:33</div>
<svg style="position:absolute;left:598px;top:934px;" width="14" height="14" viewBox="0 0 14 14"><path d="M8.5 1L3 8H7L5.5 13L11 6H7Z" fill="none" stroke="#8c8c8c" stroke-width="1.1" stroke-linejoin="round"/></svg>
<div class="t" style="left:614.30px;top:933.00px;font-size:14px;color:#8c8c8c;letter-spacing:-0.117px;">2.0.0-beta.29</div>
<svg style="position:absolute;left:705px;top:937px;" width="13" height="13" viewBox="0 0 13 13"><path d="M4.6 8.4L8.4 4.6M3.8 6.2L1.9 8.1A2.4 2.4 0 0 0 4.9 11.1L6.8 9.2M9.2 6.8L11.1 4.9A2.4 2.4 0 0 0 8.1 1.9L6.2 3.8" fill="none" stroke="#8c8c8c" stroke-width="1.15"/></svg>
<div class="t" style="left:720.70px;top:935.00px;font-size:14px;color:#8c8c8c;letter-spacing:0.130px;">http://nginx-demo-2:9000</div>
<svg style="position:absolute;left:318px;top:969px;" width="12" height="11" viewBox="0 0 12 11"><path d="M0.6 0V10.4H11.8M2.4 8L5 4.6L7.2 6.6L10.6 2.6" fill="none" stroke="#8c8c8c" stroke-width="1.1"/></svg>
<div class="t" style="left:334.20px;top:967.00px;font-size:14px;color:#8c8c8c;letter-spacing:-0.059px;">1min: 0.03 · 5min:0.03 · 15min:0.00</div>
<svg style="position:absolute;left:318px;top:992px;" width="12" height="13" viewBox="0 0 12 13"><path d="M6 12.5V1.5M1 6.2L6 1.2L11 6.2" fill="none" stroke="#8c8c8c" stroke-width="1.2"/></svg>
<div class="t" style="left:334.50px;top:992.00px;font-size:14px;color:#8c8c8c;letter-spacing:-0.314px;">40.36 KB</div>
<svg style="position:absolute;left:400px;top:992px;" width="12" height="13" viewBox="0 0 12 13"><path d="M6 0.5V11.5M1 6.8L6 11.8L11 6.8" fill="none" stroke="#8c8c8c" stroke-width="1.2"/></svg>
<div class="t" style="left:416.00px;top:992.00px;font-size:14px;color:#8c8c8c;letter-spacing:-0.257px;">35.46 KB</div>
<svg style="position:absolute;left:637px;top:964px;" width="18" height="18" viewBox="0 0 18 18"><rect x="2.7" y="2.6" width="12.8" height="13" rx="2" fill="none" stroke="#8c8c8c" stroke-width="1.3"/><rect x="6.4" y="6.4" width="5.4" height="5.4" fill="none" stroke="#8c8c8c" stroke-width="1.1"/><path d="M6.6 0.3V2.6M11.3 0.3V2.6M6.6 15.6V17.6M11.3 15.6V17.6M0.2 6.6H2.7M0.2 10.4H2.7M15.5 6.6H17.9M15.5 10.4H17.9" stroke="#8c8c8c" stroke-width="1.2"/></svg>
<div class="t" style="left:659.50px;top:968.00px;font-size:14px;color:#8c8c8c;letter-spacing:-0.583px;">4 CPU · 0.75%</div>
<div style="position:absolute;left:637px;top:994px;width:300px;height:8px;border-radius:4px;background:#f0f0f0;overflow:hidden"></div>
<div style="position:absolute;left:637px;top:994px;width:3px;height:8px;border-radius:4px 0 0 4px;background:#1677ff"></div>
<svg style="position:absolute;left:988px;top:967.5px;" width="16" height="11" viewBox="0 0 16 11"><path d="M1.4 0.6H14.6Q15.4 0.6 15.4 1.4V6.6L14.6 7.2L15.4 7.8V9.8H12.6L12 8.6H4L3.4 9.8H0.6V7.8L1.4 7.2L0.6 6.6V1.4Q0.6 0.6 1.4 0.6Z" fill="none" stroke="#8c8c8c" stroke-width="1.1" stroke-linejoin="round"/><path d="M3.5 2.8V5.2M6.5 2.8V5.2M9.5 2.8V5.2M12.5 2.8V5.2" stroke="#8c8c8c" stroke-width="1.1" stroke-linecap="round"/></svg>
<div class="t" style="left:1009.70px;top:968.00px;font-size:14px;color:#8c8c8c;letter-spacing:-0.462px;">25 GB · 20.93%</div>
<div style="position:absolute;left:987px;top:994px;width:300px;height:8px;border-radius:4px;background:#f0f0f0"></div>
<div style="position:absolute;left:987px;top:994px;width:63px;height:8px;border-radius:4px;background:#1677ff"></div>
<svg style="position:absolute;left:1338.5px;top:966.5px;" width="12" height="15" viewBox="0 0 12 15"><rect x="0.6" y="0.6" width="10.2" height="13.4" rx="0.8" fill="none" stroke="#8c8c8c" stroke-width="1.15"/><path d="M0.6 5.3H10.8M0.6 9.8H10.8" stroke="#8c8c8c" stroke-width="1.1"/><circle cx="2.8" cy="3" r="0.6" fill="#8c8c8c"/><circle cx="2.8" cy="7.6" r="0.6" fill="#8c8c8c"/><circle cx="2.8" cy="12" r="0.6" fill="#8c8c8c"/></svg>
<div class="t" style="left:1355.50px;top:967.00px;font-size:14px;color:#8c8c8c;letter-spacing:-0.429px;">104 GB · 82.75%</div>
<div style="position:absolute;left:1337px;top:994px;width:300px;height:8px;border-radius:4px;background:#f0f0f0"></div>
<div style="position:absolute;left:1337px;top:994px;width:248px;height:8px;border-radius:4px;background:#faad14"></div>
<div style="position:absolute;left:1699px;top:979px;width:152px;height:32px;box-sizing:border-box;border:1px solid #1677ff;border-radius:6px;background:#fff"></div>
<svg style="position:absolute;left:1714px;top:986px;" width="15" height="15" viewBox="0 0 15 15"><path d="M1 1.5L14 7.5L1 13.5L3.2 7.5Z M3.2 7.5H8" fill="none" stroke="#1677ff" stroke-width="1.2" stroke-linejoin="round"/></svg>
<div class="t" style="left:1735.80px;top:988.00px;font-size:14px;color:#1677ff;letter-spacing:0.173px;">Iniciar conexión</div>
</body></html>
